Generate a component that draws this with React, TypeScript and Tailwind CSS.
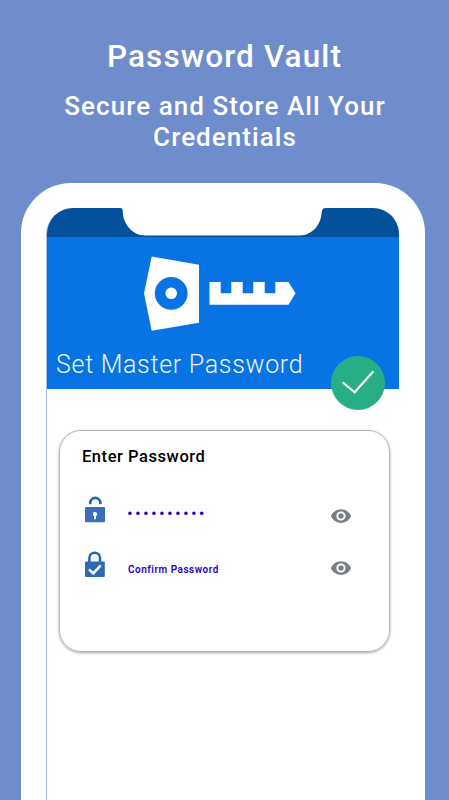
import { useState } from 'react'
import { MdRemoveRedEye } from 'react-icons/md'

function OpenLockIcon() {
  return (
    <svg width="20" height="27" viewBox="0 0 20 27" className="shrink-0">
      <path d="M5.2 8.2V7a5.1 5.1 0 0 1 10.2 0v1.2" fill="none" stroke="#2168b8" strokeWidth="2.6" />
      <rect y="11" width="20" height="15.2" rx="1" fill="#3a6fb9" />
      <circle cx="10" cy="18.2" r="2.1" fill="#fff" />
      <rect x="9" y="18.2" width="2" height="5" rx=".6" fill="#fff" />
    </svg>
  )
}

function CheckedLockIcon() {
  return (
    <svg width="20" height="27" viewBox="0 0 20 27" className="shrink-0">
      <path d="M4.4 11V7a5.3 5.3 0 0 1 10.6 0v4" fill="none" stroke="#2168b8" strokeWidth="2.5" />
      <rect y="10.6" width="19.8" height="15.4" rx="1" fill="#2f68b4" />
      <path d="M4 18.4l4.3 4 7.4-8" fill="none" stroke="#fff" strokeWidth="2.5" />
    </svg>
  )
}

function KeyLogo() {
  return (
    <svg width="152" height="76" viewBox="144 256 152 76" fill="#fff">
      <path d="M151.7 256.5l47.3 8.2v58l-47.3 8L144 293.3z" />
      <circle cx="171.2" cy="293.3" r="16.4" fill="#0874e3" />
      <circle cx="171.2" cy="293.3" r="5.8" />
      <path d="M209.5 282h11.2v11.2h10.6V282h11.4v11.2h10.6V282h11.4v11.2h10.6V282h13.2l7 11.3-7 11.4h-79z" />
    </svg>
  )
}

function Notch() {
  return (
    <svg width="206" height="29" viewBox="0 0 206 29" className="absolute top-0 left-[74px]">
      <path d="M0 0q1.8 .4 1.8 4C2 14 9.7 27.5 24.5 27.5H179c12 0 21.4-11 21.7-23.5q.2-4 4-4z" fill="#fff" />
    </svg>
  )
}

export default function App() {
  const [visible, setVisible] = useState(false)
  const [confirmVisible, setConfirmVisible] = useState(false)

  return (
    <div className="flex h-[800px] w-[449px] flex-col overflow-hidden bg-[#6f8ccd] font-['Roboto',sans-serif]">
      <header className="h-[183px] shrink-0 pt-[39px] text-center font-medium text-white">
        <h1 className="text-[31.5px] leading-9 tracking-[1.1px]">Password Vault</h1>
        <p className="mt-4 ml-px text-[26px] leading-[31px] tracking-[1.05px]">
          Secure and Store All Your
          <br />
          Credentials
        </p>
      </header>

      <div className="ml-[21px] flex w-[403.5px] flex-1 flex-col rounded-t-[50px] bg-white pt-[25px] pr-[26px] pl-[25px]">
        <main className="flex flex-1 flex-col rounded-tl-[27px] border-l border-[#a9baea]">
          {/* Status bar */}
          <div className="relative h-[29px] rounded-t-[26px] bg-[#04509b]">
            <Notch />
          </div>

          <section className="relative h-[152px] bg-[#0874e3] pt-[19px]">
            <div className="pl-[97px]">
              <KeyLogo />
            </div>
            <h2 className="mt-[16px] pl-[9px] text-[25px] leading-[34px] font-light tracking-[0.7px] whitespace-nowrap text-[#eef5fd]">
              Set Master Password
            </h2>
            <button className="absolute top-[118.5px] left-[284px] size-[54px] rounded-full bg-[#27ae87]">
              <svg width="54" height="54" viewBox="0 0 54 54" fill="none">
                <path d="M12.4 27l11.3 9.3L41.8 16" stroke="#fff" strokeWidth="2.2" strokeLinecap="round" />
              </svg>
            </button>
          </section>

          <section className="mt-[41px] ml-3 h-[222px] w-[331px] rounded-[22px] border border-[#b5b5b5] pt-[15px] pr-[37px] pl-[22px] shadow-[0_1px_3px_rgba(0,0,0,0.35)]">
            <h3 className="text-[16.5px] leading-[22px] font-medium tracking-[0.55px] text-black">Enter Password</h3>
            <div className="mt-[28px] flex h-[27px] items-center pl-[3px]">
              <OpenLockIcon />
              <span className="mt-[7px] ml-[22px] flex-1 text-[17px] leading-4 tracking-[2.25px] text-[#1b00c4]">
                ••••••••••
              </span>
              <button onClick={() => setVisible(!visible)} className="mt-3">
                <MdRemoveRedEye size={22} color="#76808a" />
              </button>
            </div>
            <div className="mt-[28px] flex h-[27px] items-center pl-[3px]">
              <CheckedLockIcon />
              <span className="mt-2.5 ml-[23px] flex-1 text-[10px] leading-4 font-semibold tracking-[0.5px] text-[#1b00c4]">
                Confirm Password
              </span>
              <button onClick={() => setConfirmVisible(!confirmVisible)} className="mt-1.5">
                <MdRemoveRedEye size={22} color="#76808a" />
              </button>
            </div>
          </section>
        </main>
      </div>
    </div>
  )
}
